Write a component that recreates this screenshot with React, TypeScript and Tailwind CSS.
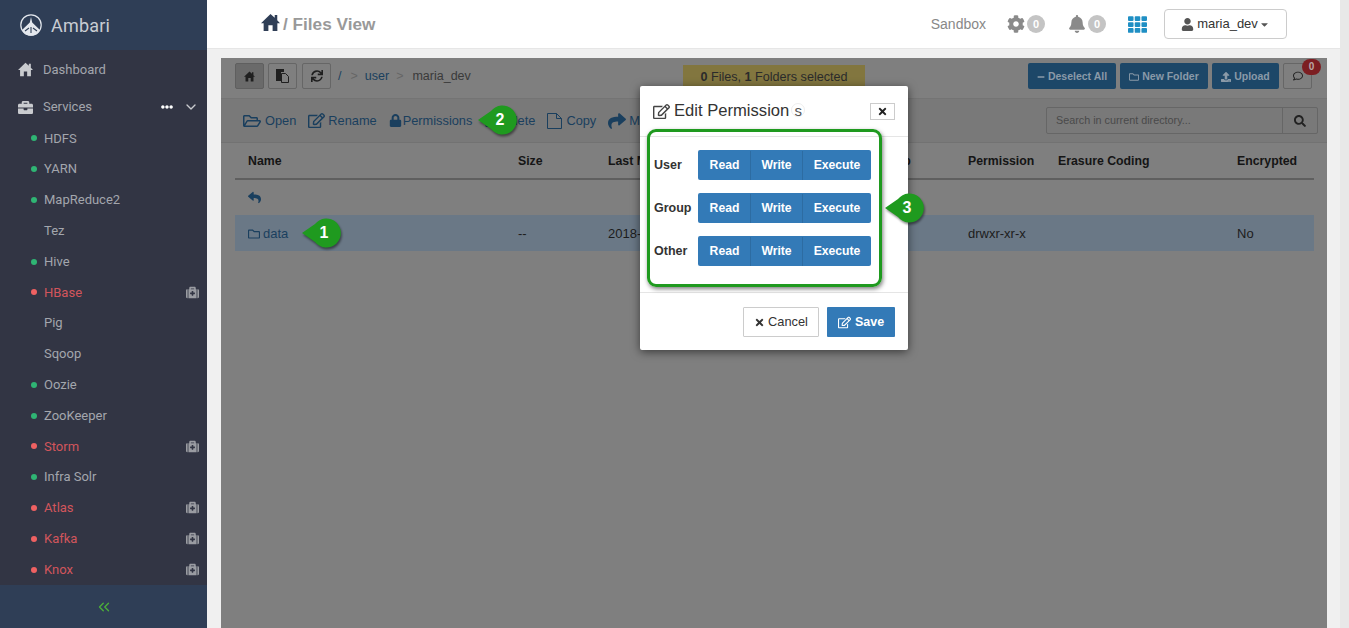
import { ChevronDown, ChevronsLeft } from "lucide-react";
import {
  FaBell,
  FaBriefcase,
  FaCaretDown,
  FaCog,
  FaEllipsisH,
  FaLock,
  FaMedkit,
  FaMinus,
  FaRegComment,
  FaRegEdit,
  FaRegFolder,
  FaRegFolderOpen,
  FaRegTrashAlt,
  FaReply,
  FaSearch,
  FaShare,
  FaSync,
  FaTh,
  FaTimes,
  FaUpload,
  FaUser,
} from "react-icons/fa";

const services = [
  { name: "HDFS", dot: "green" },
  { name: "YARN", dot: "green" },
  { name: "MapReduce2", dot: "green" },
  { name: "Tez" },
  { name: "Hive", dot: "green" },
  { name: "HBase", dot: "red", kit: true },
  { name: "Pig" },
  { name: "Sqoop" },
  { name: "Oozie", dot: "green" },
  { name: "ZooKeeper", dot: "green" },
  { name: "Storm", dot: "red", kit: true },
  { name: "Infra Solr", dot: "green" },
  { name: "Atlas", dot: "red", kit: true },
  { name: "Kafka", dot: "red", kit: true },
  { name: "Knox", dot: "red", kit: true },
];

function Logo() {
  return (
    <svg width="22" height="22" viewBox="0 0 22 22" fill="none">
      <circle cx="11" cy="11" r="10.2" stroke="#e4e8ee" strokeWidth="1.2" />
      <path d="M11 3 L12.2 8.5 L20 16 A10 10 0 0 1 2 16 L9.8 8.5 Z" fill="#e4e8ee" />
      <path d="M5 17 L9 14 M11 13 L11 19 M13 14 L17 17" stroke="#2f3e56" strokeWidth="1.1" />
    </svg>
  );
}

function HomeIcon({ size, className }: { size: number; className: string }) {
  return (
    <svg width={size} height={size} viewBox="0 0 18 18" className={className} fill="currentColor">
      <path d="M9 1 L13 4.6 V2 H15.4 V6.8 L18 9.6 H15.5 V17 H11 V11.5 H7 V17 H2.5 V9.6 H0 Z" />
    </svg>
  );
}

function Sidebar() {
  return (
    <aside className="w-[207px] h-full shrink-0 flex flex-col bg-[#323544] text-[13px] text-[#a3a6ad] font-['Roboto',sans-serif]">
      <div className="h-[50px] shrink-0 bg-[#2f3e56] flex items-center pl-[20px] gap-[9px]">
        <Logo />
        <span className="text-[18px] text-[#c8ccd2] tracking-[0.2px]">Ambari</span>
      </div>
      <div className="h-[39px] shrink-0 flex items-center pl-[18px] gap-[10px]">
        <HomeIcon size={15} className="text-[#c9cbcf]" />
        <span>Dashboard</span>
      </div>
      <div className="h-[34px] shrink-0 pt-[2px] flex items-center pl-[18px] pr-[8px]">
        <FaBriefcase className="text-[#c9cbcf] text-[15px]" />
        <span className="ml-[10px] flex-1">Services</span>
        <FaEllipsisH className="text-white text-[12px] mr-[10px]" />
        <ChevronDown size={16} className="text-[#c9cbcf]" />
      </div>
      <div className="flex-1 min-h-0">
        {services.map((s) => (
          <div key={s.name} className="h-[30.8px] flex items-center pl-[31px] pr-[8px]">
            <span
              className={
                s.dot === "green"
                  ? "w-[6px] h-[6px] rounded-full bg-[#2fb574]"
                  : s.dot === "red"
                    ? "w-[6px] h-[6px] rounded-full bg-[#ef6162]"
                    : "w-[6px] h-[6px]"
              }
            />
            <span className={s.dot === "red" ? "ml-[7px] flex-1 text-[#d2555c]" : "ml-[7px] flex-1"}>{s.name}</span>
            {s.kit && <FaMedkit className="text-[#9a9ca2] text-[13px]" />}
          </div>
        ))}
      </div>
      <div className="h-[43px] shrink-0 bg-[#2f3e56] flex items-center justify-center">
        <ChevronsLeft size={18} strokeWidth={1.8} className="text-[#4caf3a]" />
      </div>
    </aside>
  );
}

function Badge() {
  return (
    <span className="w-[18px] h-[18px] rounded-full bg-[#c4c4c4] text-white text-[11px] font-bold flex items-center justify-center">
      0
    </span>
  );
}

function TopBar() {
  return (
    <header className="h-[49px] shrink-0 bg-white border-b border-[#e6e6e6] flex items-center pl-[54px] pr-[53px]">
      <HomeIcon size={19} className="text-[#2f3e56] mb-[3px]" />
      <span className="ml-[3px] pt-[1px] text-[17.2px] text-[#999] font-bold">/ Files View</span>
      <span className="ml-auto mr-[1px] text-[14px] text-[#888]">Sandbox</span>
      <span className="ml-[20px] flex items-center gap-[2px]">
        <FaCog className="text-[#8a8a8a] text-[18px]" />
        <Badge />
      </span>
      <span className="ml-[23px] flex items-center gap-[2px]">
        <FaBell className="text-[#8a8a8a] text-[18px]" />
        <Badge />
      </span>
      <FaTh className="ml-[22px] text-[#1f8fc4] text-[19px]" />
      <button className="ml-[17px] w-[123px] h-[30px] border border-[#ccc] rounded-[4px] flex items-center justify-center text-[13px] text-[#333]">
        <FaUser className="text-[#555] text-[13px] mr-[3px]" />
        maria_dev
        <FaCaretDown className="text-[#555] text-[11px] ml-[1px]" />
      </button>
    </header>
  );
}

function SquareBtn({ children, active }: { children: React.ReactNode; active?: boolean }) {
  return (
    <button
      className={
        active
          ? "w-[29px] h-[26px] border border-[#5f5f5f] rounded-[2px] bg-[#6a6a6a] flex items-center justify-center text-[#1f1f1f] text-[12px]"
          : "w-[29px] h-[26px] border border-[#666] rounded-[2px] flex items-center justify-center text-[#1f1f1f] text-[12px]"
      }
    >
      {children}
    </button>
  );
}

function BlueBtn({ children, width }: { children: React.ReactNode; width: string }) {
  return (
    <button className={`${width} h-[26px] pt-[1px] rounded-[2px] bg-[#1d4768] text-[#8a9aa8] text-[10.5px] font-bold flex items-center justify-center gap-[3px]`}>
      {children}
    </button>
  );
}

function Action({ icon, label, gap }: { icon: React.ReactNode; label: string; gap: string }) {
  return (
    <span className={`flex items-center ${gap} text-[#1a3f5e]`}>
      {icon}
      {label}
    </span>
  );
}

const tableCols = "grid grid-cols-[270px_90px_172px_94px_94px_90px_179px_1fr] px-[13px] items-center";

function FilesPanel() {
  return (
    <div className="h-full bg-[#7f7f7f] text-[13px] text-[#1c1c1c]">
      <div className="h-[41px] pt-[5px] pb-[9px] border-b border-[#747474] flex items-center pl-[14px] pr-[15px]">
        <SquareBtn active>
          <HomeIcon size={11} className="text-[#1f1f1f]" />
        </SquareBtn>
        <span className="ml-[4px]">
          <SquareBtn>
            <svg width="13" height="14" viewBox="0 0 13 14" fill="none" stroke="#1f1f1f">
              <path d="M0 0 H8 V3 H5 V12 H0 Z" fill="#1f1f1f" stroke="none" />
              <path d="M5.5 4.5 H9.5 L12.5 7.5 V13.5 H5.5 Z" />
            </svg>
          </SquareBtn>
        </span>
        <span className="ml-[5px]">
          <SquareBtn>
            <FaSync />
          </SquareBtn>
        </span>
        <div className="w-[352px] pl-[7px] flex items-center text-[12.5px]">
          <span className="text-[#1a3f5e]">/</span>
          <span className="ml-[9px] text-[#666]">&gt;</span>
          <span className="ml-[7px] text-[#1a3f5e]">user</span>
          <span className="ml-[7px] text-[#666]">&gt;</span>
          <span className="ml-[9px] text-[#3a3a3a]">maria_dev</span>
        </div>
        <div className="w-[182px] h-[23px] bg-[#82763f] text-center text-[12.6px] text-[#2b2b2b] leading-[24px]">
          <b>0</b> Files, <b>1</b> Folders selected
        </div>
        <div className="ml-auto flex items-center gap-[4px]">
          <BlueBtn width="w-[88px]">
            <FaMinus className="text-[8px]" />
            Deselect All
          </BlueBtn>
          <BlueBtn width="w-[88px]">
            <FaRegFolder className="text-[10px]" />
            New Folder
          </BlueBtn>
          <BlueBtn width="w-[67px]">
            <FaUpload className="text-[10px]" />
            Upload
          </BlueBtn>
          <button className="relative w-[29px] h-[26px] border border-[#666] rounded-[2px] flex items-center justify-center text-[#222] text-[10px]">
            <FaRegComment />
            <span className="absolute -top-[5px] -right-[10px] w-[19px] h-[16px] rounded-full bg-[#7c1e22] text-[#b9a6a6] text-[10px] font-bold leading-[16px] text-center">
              0
            </span>
          </button>
        </div>
      </div>
      <div className="h-[44px] bg-[#797979] border-b border-[#727272] flex items-center pl-[22px] pr-[9px] gap-[12px] text-[12.8px]">
        <Action icon={<FaRegFolderOpen className="text-[18px]" />} label="Open" gap="gap-[4px]" />
        <Action icon={<FaRegEdit className="text-[17px]" />} label="Rename" gap="gap-[3px]" />
        <Action icon={<FaLock className="text-[13px]" />} label="Permissions" gap="gap-[1px]" />
        <Action icon={<FaRegTrashAlt className="text-[12px]" />} label="Delete" gap="gap-[2px]" />
        <Action
          icon={
            <svg width="15" height="16" viewBox="0 0 15 16" fill="none" stroke="currentColor">
              <path d="M.5 .5 H9.5 L14.5 5.5 V15.5 H.5 Z M9.5 .5 V5.5 H14.5" />
            </svg>
          }
          label="Copy"
          gap="gap-[4px]"
        />
        <Action icon={<FaShare className="text-[18px]" />} label="Move" gap="gap-[3px]" />
        <div className="ml-auto w-[272px] h-[27px] flex border border-[#666] rounded-[2px]">
          <span className="flex-1 pl-[9px] text-[10.8px] leading-[25px] text-[#4a4a4a]">Search in current directory...</span>
          <span className="w-[35px] border-l border-[#666] flex items-center justify-center text-[#222] text-[12px]">
            <FaSearch />
          </span>
        </div>
      </div>
      <div className={`${tableCols} h-[37px] pt-[1px] border-b-2 border-[#5f5f5f] mx-[14px] mr-[13px] font-bold text-[12.3px] text-[#151515]`}>
        <span>Name</span>
        <span>Size</span>
        <span>Last Modified</span>
        <span>Owner</span>
        <span>Group</span>
        <span>Permission</span>
        <span>Erasure Coding</span>
        <span>Encrypted</span>
      </div>
      <div className="h-[35px] flex items-center pl-[27px]">
        <FaReply className="text-[#1a3f5e] text-[13px]" />
      </div>
      <div className={`${tableCols} h-[36px] pt-[1px] bg-[#6a7886] mx-[14px] mr-[13px]`}>
        <span className="flex items-center gap-[3px] text-[#1a3f5e]">
          <FaRegFolder className="text-[12px]" />
          data
        </span>
        <span>--</span>
        <span>2018-08-13 12:20</span>
        <span>maria_dev</span>
        <span>hdfs</span>
        <span>drwxr-xr-x</span>
        <span />
        <span>No</span>
      </div>
    </div>
  );
}

function PermRow({ label }: { label: string }) {
  return (
    <div className="flex items-center h-[30px]">
      <span className="w-[44px] pt-[1px] font-bold text-[12.5px] text-[#333]">{label}</span>
      <div className="w-[173px] h-[30px] pt-[1px] pl-[1px] flex rounded-[2px] overflow-hidden bg-[#337ab7] text-white font-bold text-[12.2px]">
        <span className="w-[52px] flex items-center justify-center border-r border-[#2d6ca2]">Read</span>
        <span className="w-[52px] flex items-center justify-center border-r border-[#2d6ca2]">Write</span>
        <span className="flex-1 flex items-center justify-center">Execute</span>
      </div>
    </div>
  );
}

function PermissionsModal() {
  return (
    <div className="absolute left-[640px] top-[86px] w-[268px] h-[264px] bg-white shadow-[0_2px_10px_rgba(0,0,0,0.55)] rounded-[2px] flex flex-col">
      <div className="h-[51px] shrink-0 border-b border-[#e5e5e5] flex items-center pl-[13px] pr-[13px]">
        <FaRegEdit className="text-[#444] text-[17px] mr-[4px]" />
        <span className="text-[16.6px] text-[#333]">Edit Permission</span>
        <span className="ml-[2px] mb-[2px] w-[14px] h-[14px] rounded-full border border-[#eee] flex items-center justify-center text-[15px] leading-none text-[#555]">s</span>
        <button className="ml-auto w-[25px] h-[17px] border border-[#ccc] flex items-center justify-center text-[#222] text-[11px]">
          <FaTimes />
        </button>
      </div>
      <div className="h-[156px] shrink-0 border-b border-[#e5e5e5] pl-[14px] pt-[13px] flex flex-col gap-[13px]">
        <PermRow label="User" />
        <PermRow label="Group" />
        <PermRow label="Other" />
      </div>
      <div className="flex-1 pt-[1px] flex items-center justify-end gap-[8px] pr-[13px]">
        <button className="w-[76px] h-[30px] border border-[#ccc] rounded-[1px] text-[12.8px] text-[#333] flex items-center justify-center gap-[3px]">
          <FaTimes className="text-[11px]" />
          Cancel
        </button>
        <button className="w-[68px] h-[30px] rounded-[1px] bg-[#337ab7] text-[12.5px] font-bold text-white flex items-center justify-center gap-[4px]">
          <FaRegEdit className="text-[13px]" />
          Save
        </button>
      </div>
    </div>
  );
}

function Callout({ n, className }: { n: number; className: string }) {
  return (
    <div className={`absolute w-[38px] h-[30px] ${className}`}>
      <svg width="38" height="30" viewBox="0 0 38 30" className="absolute inset-0 overflow-visible drop-shadow-[1px_2px_1px_rgba(0,0,0,0.45)]">
        <path d="M0 15 L13 6 A14.5 14.5 0 1 1 13 24 Z" fill="#1f9a1f" />
      </svg>
      <span className="absolute left-[10px] w-[24px] top-0 h-[30px] flex items-center justify-center text-white font-bold text-[16px] font-['Liberation_Sans',sans-serif]">
        {n}
      </span>
    </div>
  );
}

export default function App() {
  return (
    <div className="relative w-[1349px] h-screen overflow-hidden flex bg-[#f0f0f0] font-['Liberation_Sans',sans-serif]">
      <Sidebar />
      <main className="flex-1 flex flex-col min-w-0">
        <TopBar />
        <div className="flex-1 min-h-0 pt-[9px] pl-[14px] pr-[13px]">
          <FilesPanel />
        </div>
      </main>
      <div className="w-[9px] shrink-0 bg-[#e8e8e8]" />

      <PermissionsModal />
      <div className="absolute left-[647px] top-[129px] w-[235px] h-[158px] border-[3.5px] border-[#1f9a1f] rounded-[9px] shadow-[1px_2px_4px_rgba(0,0,0,0.5)]" />
      <Callout n={1} className="left-[302px] top-[218px]" />
      <Callout n={2} className="left-[478px] top-[105px]" />
      <Callout n={3} className="left-[885px] top-[193px]" />
    </div>
  );
}
